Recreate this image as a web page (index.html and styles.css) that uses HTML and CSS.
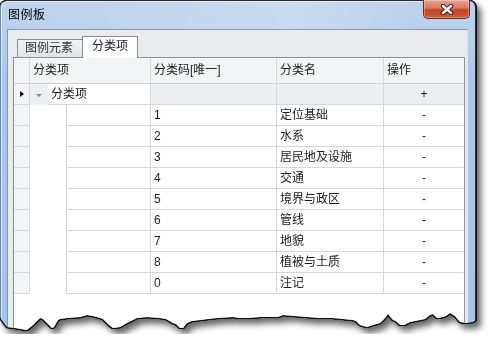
FILE: index.html
```html
<!DOCTYPE html>
<html lang="zh-CN">
<head>
  <meta charset="UTF-8" />
  <meta name="viewport" content="width=device-width, initial-scale=1" />
  <title>图例板</title>
  <link rel="stylesheet" href="styles.css">
</head>
<body>

  <div class="shot">
    <div class="window">
      <!-- 标题栏 -->
      <div class="titlebar">
        <span class="title">图例板</span>
        <span class="close">
          <svg width="14" height="11" viewBox="0 0 14 11">
            <path d="M3 2 L11 9 M11 2 L3 9" stroke="#4a1d14" stroke-width="4.4" stroke-linecap="round" fill="none" />
            <path d="M3 2 L11 9 M11 2 L3 9" stroke="#fff" stroke-width="2.4" stroke-linecap="round" fill="none" />
          </svg>
        </span>
      </div>

      <div class="client">
        <!-- 选项卡 -->
        <div class="tabs">
          <div class="tab">图例元素</div>
          <div class="tab active">分类项</div>
        </div>

        <!-- 分类项表格 -->
        <div class="page" id="grid">
          <div class="row head">
            <div class="rh"></div>
            <div class="c c1">分类项</div>
            <div class="c c2">分类码[唯一]</div>
            <div class="c c3">分类名</div>
            <div class="c c4">操作</div>
          </div>
          <div class="row group">
            <div class="rh"><span class="cur"></span></div>
            <div class="toggle"><span class="fold"></span></div>
            <div class="c key">分类项</div>
            <div class="c c2"></div>
            <div class="c c3"></div>
            <div class="c c4 op">+</div>
          </div>
        </div>
      </div>
    </div>
  </div>

  <script>
    const grid = document.getElementById("grid");

    const items = [
      ["1", "定位基础"],
      ["2", "水系"],
      ["3", "居民地及设施"],
      ["4", "交通"],
      ["5", "境界与政区"],
      ["6", "管线"],
      ["7", "地貌"],
      ["8", "植被与土质"],
      ["0", "注记"]
    ];

    // 生成分类行
    items.forEach(([code, name]) => {
      const row = document.createElement("div");
      row.className = "row item";
      row.innerHTML = `
        <div class="rh"></div>
        <div class="indent"></div>
        <div class="c sub"></div>
        <div class="c c2">${code}</div>
        <div class="c c3">${name}</div>
        <div class="c c4 op">-</div>
      `;
      grid.appendChild(row);
    });
  </script>

</body>
</html>
```

FILE: styles.css
```css
body {
  margin: 0;
  font-family: "Liberation Sans", "Noto Sans CJK SC", sans-serif;
  font-size: 12px;
  color: #1e1e1e;
  background: #fff;
}

.shot {
  width: 476px;
  filter: drop-shadow(1px 0 0 #111) drop-shadow(0 1px 0 #111) drop-shadow(-1px 0 0 #111) drop-shadow(4px 5px 3px rgba(0,0,0,0.6));
}

.window {
  box-sizing: border-box;
  width: 476px;
  height: 334px;
  display: flex;
  flex-direction: column;
  border: 1px solid #2a2a2a;
  border-left-color: #6f88a8;
  border-radius: 7px 7px 0 0;
  background: linear-gradient(#bcd2ec, #b9d0ec 30px, #a9c7eb 80px, #a4c4ea);
  box-shadow: inset 1px 1px 0 rgba(255,255,255,0.55);
  clip-path: polygon(0 0, 476px 0, 476px 320px, 473px 322px, 467px 323px, 460px 322px, 455px 316px, 450px 313px, 446px 316px, 443px 317px, 437px 318px, 433px 314px, 430px 315px, 425px 319px, 420px 320px, 410px 322px, 404px 325px, 400px 325px, 396px 321px, 393px 320px, 388px 314px, 385px 318px, 380px 323px, 373px 325px, 367px 327px, 360px 325px, 356px 321px, 353px 320px, 343px 319px, 333px 318px, 320px 318px, 307px 317px, 295px 316px, 283px 315px, 278px 317px, 273px 317px, 260px 317px, 248px 318px, 240px 318px, 233px 317px, 217px 318px, 208px 319px, 200px 320px, 192px 321px, 187px 323px, 183px 328px, 180px 328px, 176px 324px, 173px 323px, 166px 319px, 160px 318px, 147px 317px, 137px 318px, 131px 321px, 127px 323px, 120px 327px, 113px 328px, 109px 325px, 107px 323px, 103px 319px, 100px 318px, 93px 316px, 87px 315px, 80px 317px, 67px 318px, 60px 319px, 58px 320px, 54px 327px, 52px 328px, 49px 325px, 47px 323px, 43px 319px, 40px 318px, 36px 322px, 33px 325px, 27px 330px, 21px 329px, 15px 328px, 7px 327px, 3px 322px, 0 317px);
}

.titlebar {
  height: 28px;
  display: flex;
  justify-content: space-between;
  align-items: flex-start;
  background: linear-gradient(90deg, rgba(255,255,255,0) 0, rgba(255,255,255,0.22) 62%, rgba(255,255,255,0) 88%);
}

.title {
  padding-left: 7px;
  line-height: 28px;
  font-size: 12px;
  letter-spacing: 0.5px;
  color: #000;
}

.close {
  box-sizing: border-box;
  width: 47px;
  height: 19px;
  margin-right: 5px;
  margin-top: -1px;
  display: flex;
  align-items: center;
  justify-content: center;
  border: 1px solid #6e2a1e;
  border-top: none;
  border-radius: 0 0 5px 5px;
  background: linear-gradient(#e6a597, #d77762 45%, #c2432a 55%, #cb5f3f);
  box-shadow: inset 0 0 0 1px rgba(255,255,255,0.3);
}

.client {
  box-sizing: border-box;
  width: 461px;
  margin-left: 6px;
  flex: 1;
  display: flex;
  flex-direction: column;
  border: 1px solid #8796aa;
  border-right-color: #dde4ec;
  border-bottom: none;
  background: #e9ebee;
}

.tabs {
  display: flex;
  align-items: flex-end;
  height: 21px;
  padding: 6px 0 0 9px;
}

.tab {
  box-sizing: border-box;
  height: 18px;
  padding: 0 9px 0 7px;
  line-height: 17px;
  border: 1px solid #898c95;
  border-bottom: none;
  border-right: none;
  background: linear-gradient(#f3f3f4, #e2e3e6);
  color: #333;
}

.tab.active {
  position: relative;
  z-index: 1;
  height: 22px;
  margin-bottom: -1px;
  padding: 0 9px;
  line-height: 19px;
  border-right: 1px solid #898c95;
  background: #fff;
  color: #1e1e1e;
}

.page {
  box-sizing: border-box;
  width: 452px;
  margin-left: 5px;
  flex: 1;
  border: 1px solid #8d9096;
  border-bottom: none;
  background: #fff;
}

.row {
  display: flex;
  height: 21px;
}

.row > div {
  box-sizing: border-box;
  flex: none;
  height: 21px;
}

.c {
  padding-left: 3px;
  line-height: 20px;
  white-space: nowrap;
  border-right: 1px solid #d6d7db;
  border-bottom: 1px solid #d6d7db;
}

.rh {
  width: 16px;
  display: flex;
  align-items: center;
  justify-content: center;
  background: #f3f4f7;
  border-right: 1px solid #d6d7db;
  border-bottom: 1px solid #d6d7db;
}

.c1 { width: 121px; }
.c2 { width: 126px; }
.c3 { width: 107px; }
.c4 { width: 80px; border-right: none; }

.row.head,
.row.head > div {
  height: 26px;
}

.row.head > div {
  background: #f3f4f6;
  line-height: 25px;
  border-bottom-color: #d0d1d5;
}

.row.head .c {
  padding-left: 3px;
}

.toggle {
  width: 18px;
  display: flex;
  align-items: center;
  justify-content: center;
  background: #eeeff2;
}

.key {
  width: 103px;
  background: #fff;
}

.row.group .c2,
.row.group .c3,
.row.group .c4 {
  background: #eeeff2;
}

.cur {
  width: 0;
  height: 0;
  margin-left: 1px;
  border-style: solid;
  border-width: 3.5px 0 3.5px 4px;
  border-color: transparent transparent transparent #000;
}

.fold {
  width: 0;
  height: 0;
  margin-top: 2px;
  border-style: solid;
  border-width: 3px 3px 0 3px;
  border-color: #8a8a8a transparent transparent transparent;
}

.indent {
  width: 36px;
}

.sub {
  width: 85px;
  border-left: 1px solid #d6d7db;
}

.op {
  padding-left: 0;
  text-align: center;
}
```
